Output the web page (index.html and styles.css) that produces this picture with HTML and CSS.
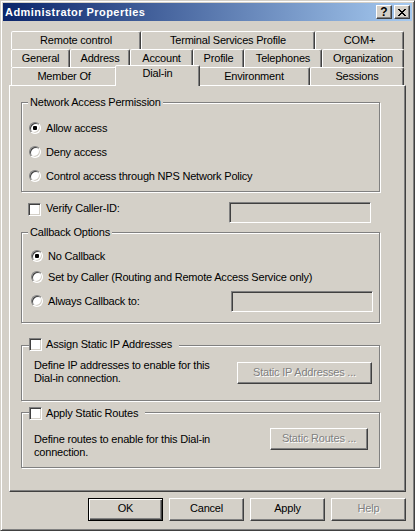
FILE: index.html
```html
<!DOCTYPE html>
<html>
<head>
<meta charset="utf-8">
<title>Administrator Properties</title>
<link rel="stylesheet" href="styles.css">
</head>
<body>
<div class="window">
  <div class="titlebar">
    <span class="title">Administrator Properties</span>
    <span class="cbtn cbtn-help">?</span>
    <span class="cbtn cbtn-close"><svg width="8" height="7" viewBox="0 0 8 7" shape-rendering="crispEdges"><path d="M0 0h2v1H0z M6 0h2v1H6z M1 1h2v1H1z M5 1h2v1H5z M2 2h4v1H2z M3 3h2v1H3z M2 4h4v1H2z M1 5h2v1H1z M5 5h2v1H5z M0 6h2v1H0z M6 6h2v1H6z" fill="#000"/></svg></span>
  </div>

  <div class="tabs">
    <div class="tabrow">
      <div class="tab w-130">Remote control</div>
      <div class="tab w-174">Terminal Services Profile</div>
      <div class="tab rest">COM+</div>
    </div>
    <div class="tabrow">
      <div class="tab w-59">General</div>
      <div class="tab w-60">Address</div>
      <div class="tab w-63">Account</div>
      <div class="tab w-51">Profile</div>
      <div class="tab w-78">Telephones</div>
      <div class="tab rest">Organization</div>
    </div>
    <div class="tabrow">
      <div class="tab w-106">Member Of</div>
      <div class="tab selected">Dial-in</div>
      <div class="tab w-112">Environment</div>
      <div class="tab rest">Sessions</div>
    </div>
  </div>

  <div class="panel">
    <div class="group group-access">
      <div class="group-head"><span class="group-label">Network Access Permission</span></div>
      <div class="opts opts-access">
        <div class="opt"><span class="radio on"></span><span>Allow access</span></div>
        <div class="opt"><span class="radio"></span><span>Deny access</span></div>
        <div class="opt"><span class="radio"></span><span>Control access through NPS Network Policy</span></div>
      </div>
    </div>

    <div class="verify-row">
      <span class="check"></span>
      <span class="verify-label">Verify Caller-ID:</span>
      <span class="field"></span>
    </div>

    <div class="group group-callback">
      <div class="group-head"><span class="group-label">Callback Options</span></div>
      <div class="opts opts-callback">
        <div class="opt opt-first"><span class="radio on"></span><span>No Callback</span></div>
        <div class="opt opt-second"><span class="radio"></span><span>Set by Caller (Routing and Remote Access Service only)</span></div>
        <div class="opt opt-third"><span class="radio"></span><span>Always Callback to:</span><span class="field field-callback"></span></div>
      </div>
    </div>

    <div class="group group-ip">
      <div class="group-head check-head head-ip"><span class="check"></span><span class="check-label">Assign Static IP Addresses</span></div>
      <div class="group-body body-ip">
        <div class="desc">Define IP addresses to enable for this<br>Dial-in connection.</div>
        <div class="btn disabled btn-ip">Static IP Addresses ...</div>
      </div>
    </div>

    <div class="group group-routes">
      <div class="group-head check-head head-routes"><span class="check"></span><span class="check-label">Apply Static Routes</span></div>
      <div class="group-body body-routes">
        <div class="desc">Define routes to enable for this Dial-in<br>connection.</div>
        <div class="btn disabled btn-routes">Static Routes ...</div>
      </div>
    </div>
  </div>

  <div class="actions">
    <div class="btn btn-dialog btn-default">OK</div>
    <div class="btn btn-dialog">Cancel</div>
    <div class="btn btn-dialog">Apply</div>
    <div class="btn btn-dialog disabled">Help</div>
  </div>
</div>
</body>
</html>
```

FILE: styles.css
```css
* {
  box-sizing: border-box;
}

html,
body {
  margin: 0;
  padding: 0;
}

body {
  width: 415px;
  height: 531px;
  overflow: hidden;
  background: #d4d0c8;
  font-family: "Liberation Sans", Arial, sans-serif;
  font-size: 11px;
  line-height: 13px;
  letter-spacing: -0.2px;
  color: #000;
}

.window {
  width: 415px;
  height: 531px;
  background: #d4d0c8;
  border: 1px solid;
  border-color: #d4d0c8 #404040 #404040 #d4d0c8;
  box-shadow: inset 1px 1px 0 #fff, inset -1px -1px 0 #808080;
  padding: 2px;
  display: flex;
  flex-direction: column;
}

/* Title bar */
.titlebar {
  flex: none;
  height: 18px;
  padding: 0 2px;
  display: flex;
  align-items: flex-start;
  background: linear-gradient(to right, #0a246a, #a6caf0);
}

.title {
  flex: 1;
  color: #fff;
  font-weight: bold;
  letter-spacing: 0.45px;
  line-height: 18px;
  white-space: nowrap;
}

.cbtn {
  width: 16px;
  height: 14px;
  margin-top: 2px;
  border: 1px solid;
  border-color: #fff #404040 #404040 #fff;
  box-shadow: inset -1px -1px 0 #808080;
  background: #d4d0c8;
  display: flex;
  align-items: center;
  justify-content: center;
}

.cbtn-help {
  font-weight: bold;
  font-size: 12px;
  line-height: 12px;
  letter-spacing: 0;
}

.cbtn-close {
  margin-left: 2px;
}

.cbtn-close svg {
  display: block;
}

/* Tabs */
.tabs {
  flex: none;
  margin: 10px 8px 0;
}

.tabrow {
  display: flex;
  height: 18px;
}

.tab {
  height: 18px;
  border: 1px solid;
  border-bottom: 0;
  border-color: #fff #404040 transparent #fff;
  border-radius: 2px 2px 0 0;
  box-shadow: inset -1px 0 0 #808080;
  background: #d4d0c8;
  padding-top: 2px;
  text-align: center;
  white-space: nowrap;
  overflow: hidden;
}

.w-130 { flex: 0 0 130px; }
.w-174 { flex: 0 0 174px; }
.w-59 { flex: 0 0 59px; }
.w-60 { flex: 0 0 60px; }
.w-63 { flex: 0 0 63px; }
.w-51 { flex: 0 0 51px; }
.w-78 { flex: 0 0 78px; }
.w-106 { flex: 0 0 106px; }
.w-112 { flex: 0 0 112px; }
.rest { flex: 1 1 auto; }

.tab.selected {
  flex: 0 0 85px;
  height: 21px;
  margin: -2px -2px -1px;
  padding-top: 1px;
  position: relative;
  z-index: 1;
}

/* Panel */
.panel {
  flex: none;
  margin: 0 6px;
  height: 407px;
  border: 1px solid;
  border-color: #fff #404040 #404040 #fff;
  box-shadow: inset -1px -1px 0 #808080;
  padding: 0;
}

.group {
  width: 359px;
  margin-left: 11px;
  border: 1px solid #808080;
  box-shadow: 1px 1px 0 #fff, inset 1px 1px 0 #fff;
}

.group-head {
  display: flex;
  height: 13px;
  margin-top: -7px;
  padding-left: 6px;
}

.group-label {
  background: #d4d0c8;
  padding: 0 2px;
  white-space: nowrap;
}

.check-head {
  height: 14px;
  padding-left: 6px;
  align-items: flex-start;
}

.check-head .check,
.check-head .check-label {
  position: relative;
}

.check-head .check {
  margin-left: 1px;
}

.check-label {
  background: #d4d0c8;
  padding: 0 7px 0 4px;
  white-space: nowrap;
}

.head-ip {
  margin-top: -8px;
}

.head-routes {
  margin-top: -6px;
}

.group-access {
  margin-top: 16px;
}

.opts-access {
  padding: 7px 0 3px 7px;
}

.opts-access .opt {
  height: 24px;
}

.opt {
  display: flex;
  align-items: center;
  gap: 5px;
  white-space: nowrap;
}

.group-callback {
  margin-top: 9px;
}

.opts-callback {
  padding: 5px 6px 10px 9px;
}

.opt-first {
  height: 24px;
}

.opt-second {
  height: 18px;
}

.opt-third {
  height: 22px;
  margin-top: 4px;
}

.field-callback {
  margin-left: auto;
  height: 22px;
}

.group-ip {
  margin-top: 22px;
}

.group-routes {
  margin-top: 11px;
}

.group-body {
  display: flex;
  align-items: flex-start;
  padding-left: 12px;
}

.body-ip {
  height: 48px;
  padding-right: 7px;
}

.body-ip .desc {
  margin-top: 7px;
}

.btn-ip {
  margin-left: auto;
  margin-top: 10px;
  width: 135px;
  height: 22px;
}

.body-routes {
  height: 46px;
  padding-right: 11px;
}

.body-routes .desc {
  margin-top: 12px;
}

.btn-routes {
  margin-left: auto;
  margin-top: 7px;
  width: 98px;
  height: 22px;
}

.desc {
  white-space: nowrap;
}

/* Verify caller row */
.verify-row {
  display: flex;
  align-items: flex-start;
  margin: 10px 0 0 18px;
  width: 343px;
}

.verify-row .check {
  margin-top: 1px;
}

.verify-label {
  margin-left: 5px;
}

.verify-row .field {
  margin-left: auto;
}

/* Controls */
.radio {
  flex: none;
  width: 12px;
  height: 12px;
  border-radius: 50%;
  background: #fff;
  border: 1px solid;
  border-color: #808080 #fff #fff #808080;
  box-shadow: inset 1px 1px 0 #404040, inset -1px -1px 0 #d4d0c8;
  display: flex;
  align-items: center;
  justify-content: center;
}

.radio.on::after {
  content: "";
  width: 4px;
  height: 4px;
  background: #000;
  border-radius: 1px;
}

.check {
  flex: none;
  display: block;
  width: 13px;
  height: 13px;
  background: #fff;
  border: 1px solid;
  border-color: #808080 #fff #fff #808080;
  box-shadow: inset 1px 1px 0 #404040, inset -1px -1px 0 #d4d0c8;
}

.field {
  flex: none;
  display: block;
  width: 142px;
  height: 21px;
  background: #d4d0c8;
  border: 1px solid;
  border-color: #808080 #fff #fff #808080;
  box-shadow: inset 1px 1px 0 #404040, inset -1px -1px 0 #d4d0c8;
}

.btn {
  flex: none;
  display: flex;
  align-items: center;
  justify-content: center;
  padding-bottom: 1px;
  background: #d4d0c8;
  border: 1px solid;
  border-color: #fff #404040 #404040 #fff;
  box-shadow: inset -1px -1px 0 #808080;
  white-space: nowrap;
}

.btn.disabled {
  color: #808080;
  text-shadow: 1px 1px 0 #fff;
}

.actions {
  flex: none;
  display: flex;
  justify-content: flex-end;
  gap: 6px;
  margin-top: 6px;
  padding-right: 6px;
}

.btn-dialog {
  width: 75px;
  height: 23px;
  padding-bottom: 2px;
}

.btn-default {
  border-color: #000;
  box-shadow: inset 1px 1px 0 #fff, inset -1px -1px 0 #404040, inset -2px -2px 0 #808080;
}
```
